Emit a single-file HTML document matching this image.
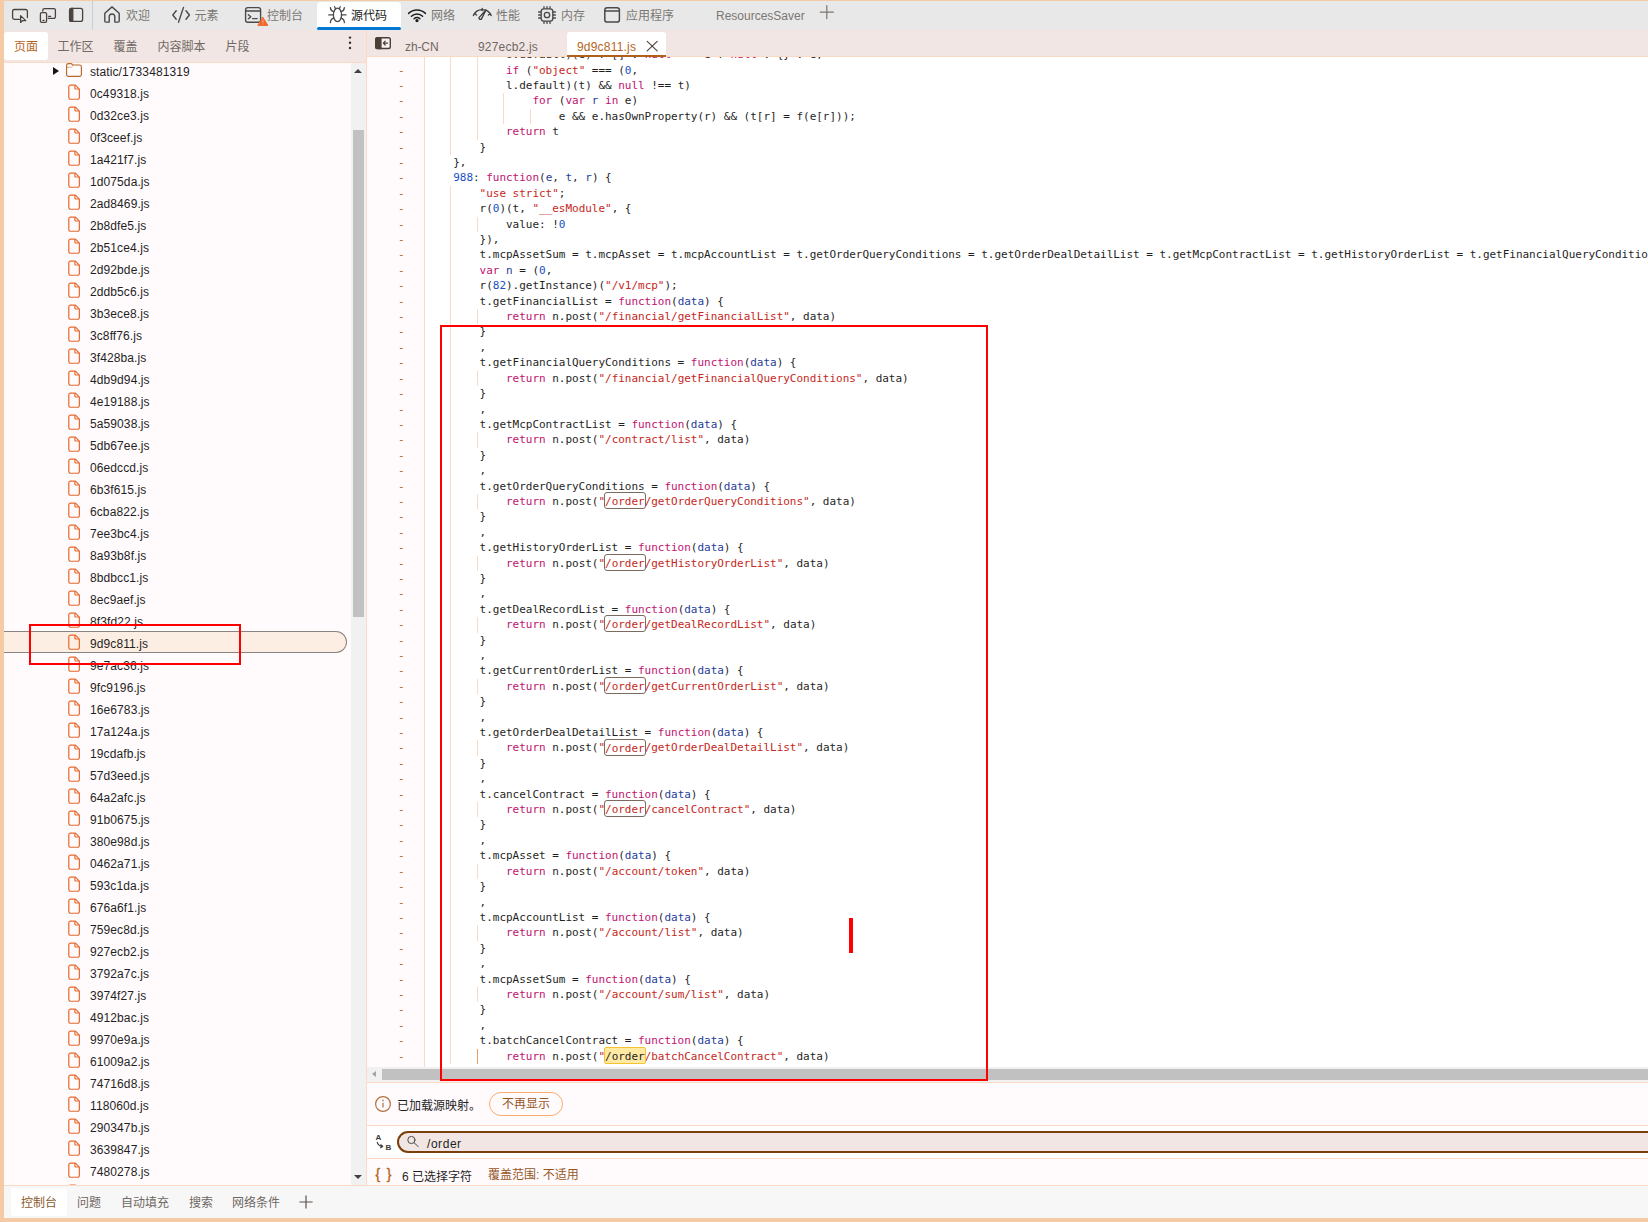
<!DOCTYPE html>
<html lang="zh-CN">
<head>
<meta charset="utf-8">
<title>DevTools</title>
<style>
*{box-sizing:border-box;margin:0;padding:0}
html,body{width:1648px;height:1222px;overflow:hidden}
body{position:relative;background:#f5cba5;font-family:"Liberation Sans","Noto Sans CJK SC",sans-serif;font-size:12px;color:#1f1f1f;-webkit-font-smoothing:antialiased}
.abs{position:absolute}
#toolbar{position:absolute;left:4px;top:1px;width:1644px;height:29px;background:#e8e8e8}
#toolbar .t{position:absolute;top:0;height:29px;line-height:31px;color:#7b7773;white-space:nowrap;font-size:12px}
#toolbar svg{position:absolute}
#acttab{position:absolute;left:313px;top:0.5px;width:84px;height:28.5px;background:#fff;border-radius:4px 4px 0 0}
#acttab:after{content:"";position:absolute;left:0;right:0;top:25.5px;height:3px;background:#0078d4;border-radius:1.5px}
#tsep{position:absolute;left:88px;top:0;width:1px;height:29px;background:#c9cdd6}
#left{position:absolute;left:4px;top:30px;width:362px;height:1155px;background:#fffbfd}
#ltabs{position:absolute;left:0;top:0;width:362px;height:32px;background:#f1e6e3}
#ltabs .t{position:absolute;top:0;height:32px;line-height:35px;color:#6f6864;white-space:nowrap}
#ltabs .act{left:0;top:2px;width:44px;height:28px;line-height:31px;background:#fff;border-radius:3px;color:#b5651d;text-align:center}
#lline{position:absolute;left:0;top:32px;width:362px;height:1px;background:#fcd9c2}
#tree{position:absolute;left:0;top:33px;width:362px;height:1122px;overflow:hidden}
.row{position:absolute;left:0;width:343px;height:22px;line-height:22px;white-space:nowrap;margin-top:-63px}
.row .nm{position:absolute;left:86px;top:1px;letter-spacing:0.1px;font-size:12px;color:#1f1f24}
.row .fi{position:absolute;left:63px;top:2px}
.row .fo{position:absolute;left:61px;top:2px}
.row .arrow{position:absolute;left:49px;top:7px;width:0;height:0;border-left:6px solid #1b1310;border-top:4px solid transparent;border-bottom:4px solid transparent}
.row.sel{margin-top:-64px;background:#fdeee3;border:1px solid #8a8480;border-left:none;border-radius:0 11px 11px 0}
.row.sel .nm{top:1px}
.row.sel .fi{top:2px}
#vsb{position:absolute;left:347px;top:33px;width:15px;height:1122px;background:#f1f1f1}
#vsb .th{position:absolute;left:2px;top:67px;width:11px;height:487px;background:#c1c1c1}
.aup{position:absolute;left:3.4px;top:5.6px;width:0;height:0;border-bottom:4.6px solid #404040;border-left:4.1px solid transparent;border-right:4.1px solid transparent}
.adn{position:absolute;left:3.4px;bottom:5.6px;width:0;height:0;border-top:4.6px solid #404040;border-left:4.1px solid transparent;border-right:4.1px solid transparent}
#split{position:absolute;left:366px;top:30px;width:1px;height:1155px;background:#fcd9c2}
#right{position:absolute;left:367px;top:30px;width:1281px;height:1155px;background:#fff}
#rtabs{position:absolute;left:0;top:0;width:1281px;height:26px;background:#f1e6e3;z-index:3}
#rtabs .t{position:absolute;z-index:2;letter-spacing:0.2px;top:2px;height:24px;line-height:30px;color:#6f6864;white-space:nowrap}
#rline{position:absolute;left:0;top:26px;width:1281px;height:1px;background:#fcd9c2}
#ract{position:absolute;left:200px;top:2px;width:99px;height:25px;background:#fff;border-radius:3px 3px 0 0;border-bottom:2.4px solid #b0601a;z-index:1}
#code{position:absolute;left:0;top:27px;width:1281px;height:1010px;overflow:hidden;background:#fff}
#gut{position:absolute;left:0;top:0;width:58px;height:1010px;background:#fffbfd;border-right:1px solid #fcd9c2}
#lines{position:absolute;left:0;top:-9.85px;width:3000px;font-family:"DejaVu Sans Mono","Liberation Mono",monospace;font-size:11px;line-height:15.41px;letter-spacing:-0.022px;color:#1f1f1f}
.ln{position:relative;height:15.41px;white-space:pre}
.ln .gm{position:absolute;left:31px;top:0;color:#b4611a}
.ln .tx{position:absolute;left:59.8px;top:0}
.ln .g.a{background:#e8a060}
.ln .g{position:absolute;top:0;width:1px;height:15.41px;background:#fcd9c2;margin-left:57px}
.k{color:#c0136f}.s{color:#c5281c}.n{color:#1750c4}.d{color:#1f3d99}
.m{color:#c5281c;outline:1px solid #7a6a60;outline-offset:0;border-radius:2px;padding:1.8px 0 0.3px}
.c{color:#1f1f1f;background:#ffe9a3;outline:1px solid #f5c331;border-radius:1px;padding:1.8px 0 0.3px}
#hsb{position:absolute;left:0;top:1037px;width:1281px;height:15px;background:#f1f1f1}
#hsb .th{position:absolute;left:15px;top:2px;width:1270px;height:11px;background:#c1c1c1}
#hsb .al{position:absolute;left:5px;top:3.9px;width:0;height:0;border-right:4px solid #a3a3a3;border-top:3.6px solid transparent;border-bottom:3.6px solid transparent}
.hl{position:absolute;left:0;width:1281px;height:1px;background:#fcd9c2}
#info{position:absolute;left:0;top:1053px;width:1281px;height:42px;background:#fffbfd}
#srch{position:absolute;left:0;top:1096px;width:1281px;height:32px;background:#fff}
#stat{position:absolute;left:0;top:1129px;width:1281px;height:26px;background:#fffbfd}
#bline{position:absolute;left:4px;top:1185px;width:1644px;height:1px;background:#fcd9c2}
#drawer{position:absolute;left:4px;top:1186px;width:1644px;height:32px;background:#f7f7f7}
#drawer .t{position:absolute;top:0;height:32px;line-height:35px;color:#6f6864;white-space:nowrap}
#drawer .act{left:7px;top:2px;width:56px;height:28px;line-height:31px;background:#fff;border-radius:3px;color:#8a5a2b;text-align:center}
.redbox{position:absolute;border:2px solid #ff0000}
</style>
</head>
<body>
<div id="toolbar">
  <div id="acttab"></div>
  <div id="tsep"></div>
  <svg style="left:-4px;top:-1px" width="860" height="30" viewBox="0 0 860 30" fill="none" stroke="#4b4340" stroke-width="1.3" stroke-linecap="round" stroke-linejoin="round">
<!-- inspect -->
<path d="M19.5 19.3H14.4a1.8 1.8 0 0 1-1.8-1.8V11.3a1.8 1.8 0 0 1 1.8-1.8H25.6a1.8 1.8 0 0 1 1.8 1.8V17.5"/>
<path d="M20.6 15.6V22.4L22.6 20.6H25.8Z"/>
<!-- device -->
<path d="M42.8 11V10.2a1.6 1.6 0 0 1 1.6-1.6H53.8a1.6 1.6 0 0 1 1.6 1.6V16.8a1.6 1.6 0 0 1-1.6 1.6H48.4"/>
<rect x="40.4" y="12.6" width="6.2" height="9.8" rx="1.3"/>
<path d="M48.6 16.3H50.6M43 20.4H44"/>
<!-- dock -->
<rect x="69.6" y="8.4" width="13" height="13" rx="2"/>
<path d="M69.6 10.4a2 2 0 0 1 2-2H72.8V21.4H71.6a2 2 0 0 1-2-2Z" fill="#4b4340"/>
<!-- home -->
<g stroke="#4a4a4a" stroke-width="1.4">
<path d="M104.8 13.2 112 6.9l7.2 6.3v7.9a1 1 0 0 1-1 1h-3.4v-5.300000000000001a2.800000000000001 2.8 0 0 0-5.6 0v5.3h-3.4a1 1 0 0 1-1-1Z"/>
<!-- elements -->
<path d="M176.2 10.8 172.8 15l3.4 4.2M186 10.8 189.4 15l-3.4 4.2M183.5 7.4 178.5 22.2"/>
<!-- console -->
<rect x="245.6" y="7.6" width="15" height="14.6" rx="2.2"/>
<path d="M245.8 11H260.4M248.4 14.8 250.8 16.8 248.4 18.8M252.6 18.6H257.2"/>
</g>
<path d="M263 17.4 267.8 25.4H258.2Z" fill="#f0692a" stroke="#f0692a" stroke-width="1"/>
<path d="M263 20v2.600000000000001M263 24v.2" stroke="#f7b08a" stroke-width="0.9"/>
<!-- bug -->
<g stroke="#4a4a4a" stroke-width="1.3">
<ellipse cx="337.5" cy="14.9" rx="4.1" ry="6.8"/>
<path d="M335.4 8.8 334.6 6.6M339.4 8.8 340.2 6.6M333.5 14.9H328.8M341.3 14.9H346M333.8 11.6C331.4 11.2 330.6 9.6 330.4 7.6M341 11.6C343.4 11.2 344.2 9.6 344.4 7.6M333.8 18.2C331.4 18.6 330.6 20.2 330.4 22.6M341 18.2C343.4 18.6 344.2 20.2 344.4 22.6"/>
</g>
<!-- wifi -->
<g stroke="#1e1e1e" stroke-width="1.5">
<path d="M408.6 13.4a12 12 0 0 1 16.8 0M411.4 16.2a8 8 0 0 1 11.2 0M414.1 18.7a4.100000000000001 4.1 0 0 1 5.8 0"/>
<circle cx="417" cy="20.6" r="0.9" fill="#1e1e1e"/>
</g>
<!-- performance -->
<g stroke="#3a3a3a" stroke-width="1.3">
<path d="M473.4 15.6a9.6 9.6 0 0 1 17.8 0M482.2 8.4V10.6M475 13.8 476.6 15M490 13.8 488.400000000000006 15"/>
<path d="M486 10 481.6 18.6a1.4 1.4 0 0 1-2.6-1Z"/>
</g>
<!-- memory -->
<g stroke="#4a4a4a" stroke-width="1.3">
<rect x="541.2" y="8.8" width="11.6" height="12.4" rx="2.6"/>
<circle cx="547" cy="15" r="2.7"/>
<path d="M544 8.6V6.6M547 8.6V6.6M550 8.6V6.6M544 21.4V23.4M547 21.4V23.4M550 21.4V23.4M541 12H538.6M541 15H538.6M541 18H538.6M553 12H555.4M553 15H555.4M553 18H555.4"/>
</g>
<!-- application -->
<g stroke="#4a4a4a" stroke-width="1.5">
<rect x="604.8" y="7.7" width="14.6" height="14.4" rx="2.4"/>
<path d="M605 11H619.2"/>
</g>
<!-- plus -->
<path d="M826.8 5.6V18.6M820.3 12.1H833.3" stroke="#7d746f" stroke-width="1.2"/>
</svg>

  <span class="t" style="left:122px">欢迎</span>
  <span class="t" style="left:190.5px">元素</span>
  <span class="t" style="left:263px">控制台</span>
  <span class="t" style="left:347px;color:#1b1b1b">源代码</span>
  <span class="t" style="left:427px">网络</span>
  <span class="t" style="left:492px">性能</span>
  <span class="t" style="left:557px">内存</span>
  <span class="t" style="left:622px">应用程序</span>
  <span class="t" style="left:712px">ResourcesSaver</span>
</div>
<div id="left">
  <div id="ltabs">
    <span class="t act">页面</span>
    <span class="t" style="left:53.5px">工作区</span>
    <span class="t" style="left:109.5px">覆盖</span>
    <span class="t" style="left:153.5px">内容脚本</span>
    <span class="t" style="left:221.5px">片段</span>
    <svg class="abs" style="left:342px;top:5.3px" width="8" height="16" viewBox="0 0 8 16"><circle cx="4" cy="2.6" r="1.2" fill="#3a302b"/><circle cx="4" cy="7.8" r="1.2" fill="#3a302b"/><circle cx="4" cy="13" r="1.2" fill="#3a302b"/></svg>
  </div>
  <div id="lline"></div>
  <div id="tree">
<div class="row" style="top:60px"><span class="arrow"></span><svg class="fo" width="18" height="16" viewBox="0 0 18 16" fill="none" stroke-linejoin="round"><path d="M1.6 5.3H5.6c.8 0 1.3-.3 1.7-.9l.7-1.1" stroke="#dbb08c" stroke-width="1"/><path d="M1.6 4.6V3.4a1.8 1.8 0 0 1 1.8-1.8H5.7c.7 0 1.2.3 1.6.8l.5.6H14.6a1.8 1.8 0 0 1 1.8 1.8V12.6a1.8 1.8 0 0 1-1.8 1.8H3.4a1.8 1.8 0 0 1-1.8-1.8Z" stroke="#b5692b" stroke-width="1.15"/></svg><span class="nm" >static/1733481319</span></div>
<div class="row" style="top:82px"><svg class="fi" width="14" height="17" viewBox="0 0 14 17" fill="none" stroke="#e8682a" stroke-width="1.2" stroke-linejoin="round"><path d="M3.45 1.15H8.4L12.35 5.1V13.6a1.65 1.65 0 0 1-1.65 1.65H3.45a1.65 1.65 0 0 1-1.65-1.65V2.8a1.65 1.65 0 0 1 1.65-1.65Z"/><path d="M7.9 1.3V4a1 1 0 0 0 1 1H12.2"/></svg><span class="nm">0c49318.js</span></div>
<div class="row" style="top:104px"><svg class="fi" width="14" height="17" viewBox="0 0 14 17" fill="none" stroke="#e8682a" stroke-width="1.2" stroke-linejoin="round"><path d="M3.45 1.15H8.4L12.35 5.1V13.6a1.65 1.65 0 0 1-1.65 1.65H3.45a1.65 1.65 0 0 1-1.65-1.65V2.8a1.65 1.65 0 0 1 1.65-1.65Z"/><path d="M7.9 1.3V4a1 1 0 0 0 1 1H12.2"/></svg><span class="nm">0d32ce3.js</span></div>
<div class="row" style="top:126px"><svg class="fi" width="14" height="17" viewBox="0 0 14 17" fill="none" stroke="#e8682a" stroke-width="1.2" stroke-linejoin="round"><path d="M3.45 1.15H8.4L12.35 5.1V13.6a1.65 1.65 0 0 1-1.65 1.65H3.45a1.65 1.65 0 0 1-1.65-1.65V2.8a1.65 1.65 0 0 1 1.65-1.65Z"/><path d="M7.9 1.3V4a1 1 0 0 0 1 1H12.2"/></svg><span class="nm">0f3ceef.js</span></div>
<div class="row" style="top:148px"><svg class="fi" width="14" height="17" viewBox="0 0 14 17" fill="none" stroke="#e8682a" stroke-width="1.2" stroke-linejoin="round"><path d="M3.45 1.15H8.4L12.35 5.1V13.6a1.65 1.65 0 0 1-1.65 1.65H3.45a1.65 1.65 0 0 1-1.65-1.65V2.8a1.65 1.65 0 0 1 1.65-1.65Z"/><path d="M7.9 1.3V4a1 1 0 0 0 1 1H12.2"/></svg><span class="nm">1a421f7.js</span></div>
<div class="row" style="top:170px"><svg class="fi" width="14" height="17" viewBox="0 0 14 17" fill="none" stroke="#e8682a" stroke-width="1.2" stroke-linejoin="round"><path d="M3.45 1.15H8.4L12.35 5.1V13.6a1.65 1.65 0 0 1-1.65 1.65H3.45a1.65 1.65 0 0 1-1.65-1.65V2.8a1.65 1.65 0 0 1 1.65-1.65Z"/><path d="M7.9 1.3V4a1 1 0 0 0 1 1H12.2"/></svg><span class="nm">1d075da.js</span></div>
<div class="row" style="top:192px"><svg class="fi" width="14" height="17" viewBox="0 0 14 17" fill="none" stroke="#e8682a" stroke-width="1.2" stroke-linejoin="round"><path d="M3.45 1.15H8.4L12.35 5.1V13.6a1.65 1.65 0 0 1-1.65 1.65H3.45a1.65 1.65 0 0 1-1.65-1.65V2.8a1.65 1.65 0 0 1 1.65-1.65Z"/><path d="M7.9 1.3V4a1 1 0 0 0 1 1H12.2"/></svg><span class="nm">2ad8469.js</span></div>
<div class="row" style="top:214px"><svg class="fi" width="14" height="17" viewBox="0 0 14 17" fill="none" stroke="#e8682a" stroke-width="1.2" stroke-linejoin="round"><path d="M3.45 1.15H8.4L12.35 5.1V13.6a1.65 1.65 0 0 1-1.65 1.65H3.45a1.65 1.65 0 0 1-1.65-1.65V2.8a1.65 1.65 0 0 1 1.65-1.65Z"/><path d="M7.9 1.3V4a1 1 0 0 0 1 1H12.2"/></svg><span class="nm">2b8dfe5.js</span></div>
<div class="row" style="top:236px"><svg class="fi" width="14" height="17" viewBox="0 0 14 17" fill="none" stroke="#e8682a" stroke-width="1.2" stroke-linejoin="round"><path d="M3.45 1.15H8.4L12.35 5.1V13.6a1.65 1.65 0 0 1-1.65 1.65H3.45a1.65 1.65 0 0 1-1.65-1.65V2.8a1.65 1.65 0 0 1 1.65-1.65Z"/><path d="M7.9 1.3V4a1 1 0 0 0 1 1H12.2"/></svg><span class="nm">2b51ce4.js</span></div>
<div class="row" style="top:258px"><svg class="fi" width="14" height="17" viewBox="0 0 14 17" fill="none" stroke="#e8682a" stroke-width="1.2" stroke-linejoin="round"><path d="M3.45 1.15H8.4L12.35 5.1V13.6a1.65 1.65 0 0 1-1.65 1.65H3.45a1.65 1.65 0 0 1-1.65-1.65V2.8a1.65 1.65 0 0 1 1.65-1.65Z"/><path d="M7.9 1.3V4a1 1 0 0 0 1 1H12.2"/></svg><span class="nm">2d92bde.js</span></div>
<div class="row" style="top:280px"><svg class="fi" width="14" height="17" viewBox="0 0 14 17" fill="none" stroke="#e8682a" stroke-width="1.2" stroke-linejoin="round"><path d="M3.45 1.15H8.4L12.35 5.1V13.6a1.65 1.65 0 0 1-1.65 1.65H3.45a1.65 1.65 0 0 1-1.65-1.65V2.8a1.65 1.65 0 0 1 1.65-1.65Z"/><path d="M7.9 1.3V4a1 1 0 0 0 1 1H12.2"/></svg><span class="nm">2ddb5c6.js</span></div>
<div class="row" style="top:302px"><svg class="fi" width="14" height="17" viewBox="0 0 14 17" fill="none" stroke="#e8682a" stroke-width="1.2" stroke-linejoin="round"><path d="M3.45 1.15H8.4L12.35 5.1V13.6a1.65 1.65 0 0 1-1.65 1.65H3.45a1.65 1.65 0 0 1-1.65-1.65V2.8a1.65 1.65 0 0 1 1.65-1.65Z"/><path d="M7.9 1.3V4a1 1 0 0 0 1 1H12.2"/></svg><span class="nm">3b3ece8.js</span></div>
<div class="row" style="top:324px"><svg class="fi" width="14" height="17" viewBox="0 0 14 17" fill="none" stroke="#e8682a" stroke-width="1.2" stroke-linejoin="round"><path d="M3.45 1.15H8.4L12.35 5.1V13.6a1.65 1.65 0 0 1-1.65 1.65H3.45a1.65 1.65 0 0 1-1.65-1.65V2.8a1.65 1.65 0 0 1 1.65-1.65Z"/><path d="M7.9 1.3V4a1 1 0 0 0 1 1H12.2"/></svg><span class="nm">3c8ff76.js</span></div>
<div class="row" style="top:346px"><svg class="fi" width="14" height="17" viewBox="0 0 14 17" fill="none" stroke="#e8682a" stroke-width="1.2" stroke-linejoin="round"><path d="M3.45 1.15H8.4L12.35 5.1V13.6a1.65 1.65 0 0 1-1.65 1.65H3.45a1.65 1.65 0 0 1-1.65-1.65V2.8a1.65 1.65 0 0 1 1.65-1.65Z"/><path d="M7.9 1.3V4a1 1 0 0 0 1 1H12.2"/></svg><span class="nm">3f428ba.js</span></div>
<div class="row" style="top:368px"><svg class="fi" width="14" height="17" viewBox="0 0 14 17" fill="none" stroke="#e8682a" stroke-width="1.2" stroke-linejoin="round"><path d="M3.45 1.15H8.4L12.35 5.1V13.6a1.65 1.65 0 0 1-1.65 1.65H3.45a1.65 1.65 0 0 1-1.65-1.65V2.8a1.65 1.65 0 0 1 1.65-1.65Z"/><path d="M7.9 1.3V4a1 1 0 0 0 1 1H12.2"/></svg><span class="nm">4db9d94.js</span></div>
<div class="row" style="top:390px"><svg class="fi" width="14" height="17" viewBox="0 0 14 17" fill="none" stroke="#e8682a" stroke-width="1.2" stroke-linejoin="round"><path d="M3.45 1.15H8.4L12.35 5.1V13.6a1.65 1.65 0 0 1-1.65 1.65H3.45a1.65 1.65 0 0 1-1.65-1.65V2.8a1.65 1.65 0 0 1 1.65-1.65Z"/><path d="M7.9 1.3V4a1 1 0 0 0 1 1H12.2"/></svg><span class="nm">4e19188.js</span></div>
<div class="row" style="top:412px"><svg class="fi" width="14" height="17" viewBox="0 0 14 17" fill="none" stroke="#e8682a" stroke-width="1.2" stroke-linejoin="round"><path d="M3.45 1.15H8.4L12.35 5.1V13.6a1.65 1.65 0 0 1-1.65 1.65H3.45a1.65 1.65 0 0 1-1.65-1.65V2.8a1.65 1.65 0 0 1 1.65-1.65Z"/><path d="M7.9 1.3V4a1 1 0 0 0 1 1H12.2"/></svg><span class="nm">5a59038.js</span></div>
<div class="row" style="top:434px"><svg class="fi" width="14" height="17" viewBox="0 0 14 17" fill="none" stroke="#e8682a" stroke-width="1.2" stroke-linejoin="round"><path d="M3.45 1.15H8.4L12.35 5.1V13.6a1.65 1.65 0 0 1-1.65 1.65H3.45a1.65 1.65 0 0 1-1.65-1.65V2.8a1.65 1.65 0 0 1 1.65-1.65Z"/><path d="M7.9 1.3V4a1 1 0 0 0 1 1H12.2"/></svg><span class="nm">5db67ee.js</span></div>
<div class="row" style="top:456px"><svg class="fi" width="14" height="17" viewBox="0 0 14 17" fill="none" stroke="#e8682a" stroke-width="1.2" stroke-linejoin="round"><path d="M3.45 1.15H8.4L12.35 5.1V13.6a1.65 1.65 0 0 1-1.65 1.65H3.45a1.65 1.65 0 0 1-1.65-1.65V2.8a1.65 1.65 0 0 1 1.65-1.65Z"/><path d="M7.9 1.3V4a1 1 0 0 0 1 1H12.2"/></svg><span class="nm">06edccd.js</span></div>
<div class="row" style="top:478px"><svg class="fi" width="14" height="17" viewBox="0 0 14 17" fill="none" stroke="#e8682a" stroke-width="1.2" stroke-linejoin="round"><path d="M3.45 1.15H8.4L12.35 5.1V13.6a1.65 1.65 0 0 1-1.65 1.65H3.45a1.65 1.65 0 0 1-1.65-1.65V2.8a1.65 1.65 0 0 1 1.65-1.65Z"/><path d="M7.9 1.3V4a1 1 0 0 0 1 1H12.2"/></svg><span class="nm">6b3f615.js</span></div>
<div class="row" style="top:500px"><svg class="fi" width="14" height="17" viewBox="0 0 14 17" fill="none" stroke="#e8682a" stroke-width="1.2" stroke-linejoin="round"><path d="M3.45 1.15H8.4L12.35 5.1V13.6a1.65 1.65 0 0 1-1.65 1.65H3.45a1.65 1.65 0 0 1-1.65-1.65V2.8a1.65 1.65 0 0 1 1.65-1.65Z"/><path d="M7.9 1.3V4a1 1 0 0 0 1 1H12.2"/></svg><span class="nm">6cba822.js</span></div>
<div class="row" style="top:522px"><svg class="fi" width="14" height="17" viewBox="0 0 14 17" fill="none" stroke="#e8682a" stroke-width="1.2" stroke-linejoin="round"><path d="M3.45 1.15H8.4L12.35 5.1V13.6a1.65 1.65 0 0 1-1.65 1.65H3.45a1.65 1.65 0 0 1-1.65-1.65V2.8a1.65 1.65 0 0 1 1.65-1.65Z"/><path d="M7.9 1.3V4a1 1 0 0 0 1 1H12.2"/></svg><span class="nm">7ee3bc4.js</span></div>
<div class="row" style="top:544px"><svg class="fi" width="14" height="17" viewBox="0 0 14 17" fill="none" stroke="#e8682a" stroke-width="1.2" stroke-linejoin="round"><path d="M3.45 1.15H8.4L12.35 5.1V13.6a1.65 1.65 0 0 1-1.65 1.65H3.45a1.65 1.65 0 0 1-1.65-1.65V2.8a1.65 1.65 0 0 1 1.65-1.65Z"/><path d="M7.9 1.3V4a1 1 0 0 0 1 1H12.2"/></svg><span class="nm">8a93b8f.js</span></div>
<div class="row" style="top:566px"><svg class="fi" width="14" height="17" viewBox="0 0 14 17" fill="none" stroke="#e8682a" stroke-width="1.2" stroke-linejoin="round"><path d="M3.45 1.15H8.4L12.35 5.1V13.6a1.65 1.65 0 0 1-1.65 1.65H3.45a1.65 1.65 0 0 1-1.65-1.65V2.8a1.65 1.65 0 0 1 1.65-1.65Z"/><path d="M7.9 1.3V4a1 1 0 0 0 1 1H12.2"/></svg><span class="nm">8bdbcc1.js</span></div>
<div class="row" style="top:588px"><svg class="fi" width="14" height="17" viewBox="0 0 14 17" fill="none" stroke="#e8682a" stroke-width="1.2" stroke-linejoin="round"><path d="M3.45 1.15H8.4L12.35 5.1V13.6a1.65 1.65 0 0 1-1.65 1.65H3.45a1.65 1.65 0 0 1-1.65-1.65V2.8a1.65 1.65 0 0 1 1.65-1.65Z"/><path d="M7.9 1.3V4a1 1 0 0 0 1 1H12.2"/></svg><span class="nm">8ec9aef.js</span></div>
<div class="row" style="top:610px"><svg class="fi" width="14" height="17" viewBox="0 0 14 17" fill="none" stroke="#e8682a" stroke-width="1.2" stroke-linejoin="round"><path d="M3.45 1.15H8.4L12.35 5.1V13.6a1.65 1.65 0 0 1-1.65 1.65H3.45a1.65 1.65 0 0 1-1.65-1.65V2.8a1.65 1.65 0 0 1 1.65-1.65Z"/><path d="M7.9 1.3V4a1 1 0 0 0 1 1H12.2"/></svg><span class="nm">8f3fd22.js</span></div>
<div class="row sel" style="top:632px"><svg class="fi" width="14" height="17" viewBox="0 0 14 17" fill="none" stroke="#e8682a" stroke-width="1.2" stroke-linejoin="round"><path d="M3.45 1.15H8.4L12.35 5.1V13.6a1.65 1.65 0 0 1-1.65 1.65H3.45a1.65 1.65 0 0 1-1.65-1.65V2.8a1.65 1.65 0 0 1 1.65-1.65Z"/><path d="M7.9 1.3V4a1 1 0 0 0 1 1H12.2"/></svg><span class="nm">9d9c811.js</span></div>
<div class="row" style="top:654px"><svg class="fi" width="14" height="17" viewBox="0 0 14 17" fill="none" stroke="#e8682a" stroke-width="1.2" stroke-linejoin="round"><path d="M3.45 1.15H8.4L12.35 5.1V13.6a1.65 1.65 0 0 1-1.65 1.65H3.45a1.65 1.65 0 0 1-1.65-1.65V2.8a1.65 1.65 0 0 1 1.65-1.65Z"/><path d="M7.9 1.3V4a1 1 0 0 0 1 1H12.2"/></svg><span class="nm">9e7ac36.js</span></div>
<div class="row" style="top:676px"><svg class="fi" width="14" height="17" viewBox="0 0 14 17" fill="none" stroke="#e8682a" stroke-width="1.2" stroke-linejoin="round"><path d="M3.45 1.15H8.4L12.35 5.1V13.6a1.65 1.65 0 0 1-1.65 1.65H3.45a1.65 1.65 0 0 1-1.65-1.65V2.8a1.65 1.65 0 0 1 1.65-1.65Z"/><path d="M7.9 1.3V4a1 1 0 0 0 1 1H12.2"/></svg><span class="nm">9fc9196.js</span></div>
<div class="row" style="top:698px"><svg class="fi" width="14" height="17" viewBox="0 0 14 17" fill="none" stroke="#e8682a" stroke-width="1.2" stroke-linejoin="round"><path d="M3.45 1.15H8.4L12.35 5.1V13.6a1.65 1.65 0 0 1-1.65 1.65H3.45a1.65 1.65 0 0 1-1.65-1.65V2.8a1.65 1.65 0 0 1 1.65-1.65Z"/><path d="M7.9 1.3V4a1 1 0 0 0 1 1H12.2"/></svg><span class="nm">16e6783.js</span></div>
<div class="row" style="top:720px"><svg class="fi" width="14" height="17" viewBox="0 0 14 17" fill="none" stroke="#e8682a" stroke-width="1.2" stroke-linejoin="round"><path d="M3.45 1.15H8.4L12.35 5.1V13.6a1.65 1.65 0 0 1-1.65 1.65H3.45a1.65 1.65 0 0 1-1.65-1.65V2.8a1.65 1.65 0 0 1 1.65-1.65Z"/><path d="M7.9 1.3V4a1 1 0 0 0 1 1H12.2"/></svg><span class="nm">17a124a.js</span></div>
<div class="row" style="top:742px"><svg class="fi" width="14" height="17" viewBox="0 0 14 17" fill="none" stroke="#e8682a" stroke-width="1.2" stroke-linejoin="round"><path d="M3.45 1.15H8.4L12.35 5.1V13.6a1.65 1.65 0 0 1-1.65 1.65H3.45a1.65 1.65 0 0 1-1.65-1.65V2.8a1.65 1.65 0 0 1 1.65-1.65Z"/><path d="M7.9 1.3V4a1 1 0 0 0 1 1H12.2"/></svg><span class="nm">19cdafb.js</span></div>
<div class="row" style="top:764px"><svg class="fi" width="14" height="17" viewBox="0 0 14 17" fill="none" stroke="#e8682a" stroke-width="1.2" stroke-linejoin="round"><path d="M3.45 1.15H8.4L12.35 5.1V13.6a1.65 1.65 0 0 1-1.65 1.65H3.45a1.65 1.65 0 0 1-1.65-1.65V2.8a1.65 1.65 0 0 1 1.65-1.65Z"/><path d="M7.9 1.3V4a1 1 0 0 0 1 1H12.2"/></svg><span class="nm">57d3eed.js</span></div>
<div class="row" style="top:786px"><svg class="fi" width="14" height="17" viewBox="0 0 14 17" fill="none" stroke="#e8682a" stroke-width="1.2" stroke-linejoin="round"><path d="M3.45 1.15H8.4L12.35 5.1V13.6a1.65 1.65 0 0 1-1.65 1.65H3.45a1.65 1.65 0 0 1-1.65-1.65V2.8a1.65 1.65 0 0 1 1.65-1.65Z"/><path d="M7.9 1.3V4a1 1 0 0 0 1 1H12.2"/></svg><span class="nm">64a2afc.js</span></div>
<div class="row" style="top:808px"><svg class="fi" width="14" height="17" viewBox="0 0 14 17" fill="none" stroke="#e8682a" stroke-width="1.2" stroke-linejoin="round"><path d="M3.45 1.15H8.4L12.35 5.1V13.6a1.65 1.65 0 0 1-1.65 1.65H3.45a1.65 1.65 0 0 1-1.65-1.65V2.8a1.65 1.65 0 0 1 1.65-1.65Z"/><path d="M7.9 1.3V4a1 1 0 0 0 1 1H12.2"/></svg><span class="nm">91b0675.js</span></div>
<div class="row" style="top:830px"><svg class="fi" width="14" height="17" viewBox="0 0 14 17" fill="none" stroke="#e8682a" stroke-width="1.2" stroke-linejoin="round"><path d="M3.45 1.15H8.4L12.35 5.1V13.6a1.65 1.65 0 0 1-1.65 1.65H3.45a1.65 1.65 0 0 1-1.65-1.65V2.8a1.65 1.65 0 0 1 1.65-1.65Z"/><path d="M7.9 1.3V4a1 1 0 0 0 1 1H12.2"/></svg><span class="nm">380e98d.js</span></div>
<div class="row" style="top:852px"><svg class="fi" width="14" height="17" viewBox="0 0 14 17" fill="none" stroke="#e8682a" stroke-width="1.2" stroke-linejoin="round"><path d="M3.45 1.15H8.4L12.35 5.1V13.6a1.65 1.65 0 0 1-1.65 1.65H3.45a1.65 1.65 0 0 1-1.65-1.65V2.8a1.65 1.65 0 0 1 1.65-1.65Z"/><path d="M7.9 1.3V4a1 1 0 0 0 1 1H12.2"/></svg><span class="nm">0462a71.js</span></div>
<div class="row" style="top:874px"><svg class="fi" width="14" height="17" viewBox="0 0 14 17" fill="none" stroke="#e8682a" stroke-width="1.2" stroke-linejoin="round"><path d="M3.45 1.15H8.4L12.35 5.1V13.6a1.65 1.65 0 0 1-1.65 1.65H3.45a1.65 1.65 0 0 1-1.65-1.65V2.8a1.65 1.65 0 0 1 1.65-1.65Z"/><path d="M7.9 1.3V4a1 1 0 0 0 1 1H12.2"/></svg><span class="nm">593c1da.js</span></div>
<div class="row" style="top:896px"><svg class="fi" width="14" height="17" viewBox="0 0 14 17" fill="none" stroke="#e8682a" stroke-width="1.2" stroke-linejoin="round"><path d="M3.45 1.15H8.4L12.35 5.1V13.6a1.65 1.65 0 0 1-1.65 1.65H3.45a1.65 1.65 0 0 1-1.65-1.65V2.8a1.65 1.65 0 0 1 1.65-1.65Z"/><path d="M7.9 1.3V4a1 1 0 0 0 1 1H12.2"/></svg><span class="nm">676a6f1.js</span></div>
<div class="row" style="top:918px"><svg class="fi" width="14" height="17" viewBox="0 0 14 17" fill="none" stroke="#e8682a" stroke-width="1.2" stroke-linejoin="round"><path d="M3.45 1.15H8.4L12.35 5.1V13.6a1.65 1.65 0 0 1-1.65 1.65H3.45a1.65 1.65 0 0 1-1.65-1.65V2.8a1.65 1.65 0 0 1 1.65-1.65Z"/><path d="M7.9 1.3V4a1 1 0 0 0 1 1H12.2"/></svg><span class="nm">759ec8d.js</span></div>
<div class="row" style="top:940px"><svg class="fi" width="14" height="17" viewBox="0 0 14 17" fill="none" stroke="#e8682a" stroke-width="1.2" stroke-linejoin="round"><path d="M3.45 1.15H8.4L12.35 5.1V13.6a1.65 1.65 0 0 1-1.65 1.65H3.45a1.65 1.65 0 0 1-1.65-1.65V2.8a1.65 1.65 0 0 1 1.65-1.65Z"/><path d="M7.9 1.3V4a1 1 0 0 0 1 1H12.2"/></svg><span class="nm">927ecb2.js</span></div>
<div class="row" style="top:962px"><svg class="fi" width="14" height="17" viewBox="0 0 14 17" fill="none" stroke="#e8682a" stroke-width="1.2" stroke-linejoin="round"><path d="M3.45 1.15H8.4L12.35 5.1V13.6a1.65 1.65 0 0 1-1.65 1.65H3.45a1.65 1.65 0 0 1-1.65-1.65V2.8a1.65 1.65 0 0 1 1.65-1.65Z"/><path d="M7.9 1.3V4a1 1 0 0 0 1 1H12.2"/></svg><span class="nm">3792a7c.js</span></div>
<div class="row" style="top:984px"><svg class="fi" width="14" height="17" viewBox="0 0 14 17" fill="none" stroke="#e8682a" stroke-width="1.2" stroke-linejoin="round"><path d="M3.45 1.15H8.4L12.35 5.1V13.6a1.65 1.65 0 0 1-1.65 1.65H3.45a1.65 1.65 0 0 1-1.65-1.65V2.8a1.65 1.65 0 0 1 1.65-1.65Z"/><path d="M7.9 1.3V4a1 1 0 0 0 1 1H12.2"/></svg><span class="nm">3974f27.js</span></div>
<div class="row" style="top:1006px"><svg class="fi" width="14" height="17" viewBox="0 0 14 17" fill="none" stroke="#e8682a" stroke-width="1.2" stroke-linejoin="round"><path d="M3.45 1.15H8.4L12.35 5.1V13.6a1.65 1.65 0 0 1-1.65 1.65H3.45a1.65 1.65 0 0 1-1.65-1.65V2.8a1.65 1.65 0 0 1 1.65-1.65Z"/><path d="M7.9 1.3V4a1 1 0 0 0 1 1H12.2"/></svg><span class="nm">4912bac.js</span></div>
<div class="row" style="top:1028px"><svg class="fi" width="14" height="17" viewBox="0 0 14 17" fill="none" stroke="#e8682a" stroke-width="1.2" stroke-linejoin="round"><path d="M3.45 1.15H8.4L12.35 5.1V13.6a1.65 1.65 0 0 1-1.65 1.65H3.45a1.65 1.65 0 0 1-1.65-1.65V2.8a1.65 1.65 0 0 1 1.65-1.65Z"/><path d="M7.9 1.3V4a1 1 0 0 0 1 1H12.2"/></svg><span class="nm">9970e9a.js</span></div>
<div class="row" style="top:1050px"><svg class="fi" width="14" height="17" viewBox="0 0 14 17" fill="none" stroke="#e8682a" stroke-width="1.2" stroke-linejoin="round"><path d="M3.45 1.15H8.4L12.35 5.1V13.6a1.65 1.65 0 0 1-1.65 1.65H3.45a1.65 1.65 0 0 1-1.65-1.65V2.8a1.65 1.65 0 0 1 1.65-1.65Z"/><path d="M7.9 1.3V4a1 1 0 0 0 1 1H12.2"/></svg><span class="nm">61009a2.js</span></div>
<div class="row" style="top:1072px"><svg class="fi" width="14" height="17" viewBox="0 0 14 17" fill="none" stroke="#e8682a" stroke-width="1.2" stroke-linejoin="round"><path d="M3.45 1.15H8.4L12.35 5.1V13.6a1.65 1.65 0 0 1-1.65 1.65H3.45a1.65 1.65 0 0 1-1.65-1.65V2.8a1.65 1.65 0 0 1 1.65-1.65Z"/><path d="M7.9 1.3V4a1 1 0 0 0 1 1H12.2"/></svg><span class="nm">74716d8.js</span></div>
<div class="row" style="top:1094px"><svg class="fi" width="14" height="17" viewBox="0 0 14 17" fill="none" stroke="#e8682a" stroke-width="1.2" stroke-linejoin="round"><path d="M3.45 1.15H8.4L12.35 5.1V13.6a1.65 1.65 0 0 1-1.65 1.65H3.45a1.65 1.65 0 0 1-1.65-1.65V2.8a1.65 1.65 0 0 1 1.65-1.65Z"/><path d="M7.9 1.3V4a1 1 0 0 0 1 1H12.2"/></svg><span class="nm">118060d.js</span></div>
<div class="row" style="top:1116px"><svg class="fi" width="14" height="17" viewBox="0 0 14 17" fill="none" stroke="#e8682a" stroke-width="1.2" stroke-linejoin="round"><path d="M3.45 1.15H8.4L12.35 5.1V13.6a1.65 1.65 0 0 1-1.65 1.65H3.45a1.65 1.65 0 0 1-1.65-1.65V2.8a1.65 1.65 0 0 1 1.65-1.65Z"/><path d="M7.9 1.3V4a1 1 0 0 0 1 1H12.2"/></svg><span class="nm">290347b.js</span></div>
<div class="row" style="top:1138px"><svg class="fi" width="14" height="17" viewBox="0 0 14 17" fill="none" stroke="#e8682a" stroke-width="1.2" stroke-linejoin="round"><path d="M3.45 1.15H8.4L12.35 5.1V13.6a1.65 1.65 0 0 1-1.65 1.65H3.45a1.65 1.65 0 0 1-1.65-1.65V2.8a1.65 1.65 0 0 1 1.65-1.65Z"/><path d="M7.9 1.3V4a1 1 0 0 0 1 1H12.2"/></svg><span class="nm">3639847.js</span></div>
<div class="row" style="top:1160px"><svg class="fi" width="14" height="17" viewBox="0 0 14 17" fill="none" stroke="#e8682a" stroke-width="1.2" stroke-linejoin="round"><path d="M3.45 1.15H8.4L12.35 5.1V13.6a1.65 1.65 0 0 1-1.65 1.65H3.45a1.65 1.65 0 0 1-1.65-1.65V2.8a1.65 1.65 0 0 1 1.65-1.65Z"/><path d="M7.9 1.3V4a1 1 0 0 0 1 1H12.2"/></svg><span class="nm">7480278.js</span></div>
<div class="row" style="top:1182px"><svg class="fi" width="14" height="17" viewBox="0 0 14 17" fill="none" stroke="#e8682a" stroke-width="1.2" stroke-linejoin="round"><path d="M3.45 1.15H8.4L12.35 5.1V13.6a1.65 1.65 0 0 1-1.65 1.65H3.45a1.65 1.65 0 0 1-1.65-1.65V2.8a1.65 1.65 0 0 1 1.65-1.65Z"/><path d="M7.9 1.3V4a1 1 0 0 0 1 1H12.2"/></svg><span class="nm">8421a3c.js</span></div>
  </div>
  <div id="vsb"><div class="aup"></div><div class="th"></div><div class="adn"></div></div>
</div>
<div id="split"></div>
<div id="right">
  <div id="rtabs">
    <div id="ract"></div>
    <svg class="abs" style="left:-367px;top:-30px;z-index:2" width="1648" height="60" viewBox="0 0 1648 60" fill="none" stroke-linecap="round" stroke-linejoin="round">
      <rect x="375.7" y="37.7" width="14.6" height="10.8" rx="1.8" fill="#f8f1ef" stroke="#4b4038" stroke-width="1.4"/>
      <path d="M375.7 39.5a1.8 1.8 0 0 1 1.8-1.8H380.9V48.5H377.5a1.8 1.8 0 0 1-1.8-1.8Z" fill="#4b4038" stroke="#4b4038" stroke-width="1.4"/>
      <path d="M387.6 43.1H383.4M385.2 41.2 383.3 43.1 385.2 45" stroke="#4b4038" stroke-width="1.2"/>
      <path d="M647.2 41.4 657.2 50.8M657.2 41.4 647.2 50.8" stroke="#4a3f38" stroke-width="1.1"/>
    </svg>
    <span class="t" style="left:38px;letter-spacing:-0.1px">zh-CN</span>
    <span class="t" style="left:111px">927ecb2.js</span>
    <span class="t" style="left:210px;color:#b5651d">9d9c811.js</span>
  </div>
  <div id="rline"></div>
  <div id="code">
    <div id="gut"></div>
    <div id="lines">
<div class="ln"><i class="g" style="left:26.4px"></i><i class="g" style="left:52.8px"></i><span class="gm">-</span><span class="tx">            o.default)(e) ? [] : <span class="k">null</span> === e ? <span class="k">null</span> : {} : e,</span></div>
<div class="ln"><i class="g" style="left:26.4px"></i><i class="g" style="left:52.8px"></i><span class="gm">-</span><span class="tx">            <span class="k">if</span> (<span class="s">"object"</span> === (<span class="n">0</span>,</span></div>
<div class="ln"><i class="g" style="left:26.4px"></i><i class="g" style="left:52.8px"></i><span class="gm">-</span><span class="tx">            l.default)(t) &amp;&amp; <span class="k">null</span> !== t)</span></div>
<div class="ln"><i class="g" style="left:26.4px"></i><i class="g" style="left:52.8px"></i><i class="g" style="left:79.2px"></i><span class="gm">-</span><span class="tx">                <span class="k">for</span> (<span class="k">var</span> <span class="d">r</span> <span class="k">in</span> e)</span></div>
<div class="ln"><i class="g" style="left:26.4px"></i><i class="g" style="left:52.8px"></i><i class="g" style="left:79.2px"></i><i class="g" style="left:105.6px"></i><span class="gm">-</span><span class="tx">                    e &amp;&amp; e.hasOwnProperty(r) &amp;&amp; (t[r] = f(e[r]));</span></div>
<div class="ln"><i class="g" style="left:26.4px"></i><i class="g" style="left:52.8px"></i><span class="gm">-</span><span class="tx">            <span class="k">return</span> t</span></div>
<div class="ln"><i class="g" style="left:26.4px"></i><span class="gm">-</span><span class="tx">        }</span></div>
<div class="ln"><span class="gm">-</span><span class="tx">    },</span></div>
<div class="ln"><span class="gm">-</span><span class="tx">    <span class="n">988</span>: <span class="k">function</span>(<span class="d">e</span>, <span class="d">t</span>, <span class="d">r</span>) {</span></div>
<div class="ln"><i class="g" style="left:26.4px"></i><span class="gm">-</span><span class="tx">        <span class="s">"use strict"</span>;</span></div>
<div class="ln"><i class="g" style="left:26.4px"></i><span class="gm">-</span><span class="tx">        r(<span class="n">0</span>)(t, <span class="s">"__esModule"</span>, {</span></div>
<div class="ln"><i class="g" style="left:26.4px"></i><i class="g" style="left:52.8px"></i><span class="gm">-</span><span class="tx">            value: !<span class="n">0</span></span></div>
<div class="ln"><i class="g" style="left:26.4px"></i><span class="gm">-</span><span class="tx">        }),</span></div>
<div class="ln"><i class="g" style="left:26.4px"></i><span class="gm">-</span><span class="tx">        t.mcpAssetSum = t.mcpAsset = t.mcpAccountList = t.getOrderQueryConditions = t.getOrderDealDetailList = t.getMcpContractList = t.getHistoryOrderList = t.getFinancialQueryConditions = t.getFinancialList = void 0;</span></div>
<div class="ln"><i class="g" style="left:26.4px"></i><span class="gm">-</span><span class="tx">        <span class="k">var</span> <span class="d">n</span> = (<span class="n">0</span>,</span></div>
<div class="ln"><i class="g" style="left:26.4px"></i><span class="gm">-</span><span class="tx">        r(<span class="n">82</span>).getInstance)(<span class="s">"/v1/mcp"</span>);</span></div>
<div class="ln"><i class="g" style="left:26.4px"></i><span class="gm">-</span><span class="tx">        t.getFinancialList = <span class="k">function</span>(<span class="d">data</span>) {</span></div>
<div class="ln"><i class="g" style="left:26.4px"></i><i class="g" style="left:52.8px"></i><span class="gm">-</span><span class="tx">            <span class="k">return</span> n.post(<span class="s">"/financial/getFinancialList"</span>, data)</span></div>
<div class="ln"><i class="g" style="left:26.4px"></i><span class="gm">-</span><span class="tx">        }</span></div>
<div class="ln"><i class="g" style="left:26.4px"></i><span class="gm">-</span><span class="tx">        ,</span></div>
<div class="ln"><i class="g" style="left:26.4px"></i><span class="gm">-</span><span class="tx">        t.getFinancialQueryConditions = <span class="k">function</span>(<span class="d">data</span>) {</span></div>
<div class="ln"><i class="g" style="left:26.4px"></i><i class="g" style="left:52.8px"></i><span class="gm">-</span><span class="tx">            <span class="k">return</span> n.post(<span class="s">"/financial/getFinancialQueryConditions"</span>, data)</span></div>
<div class="ln"><i class="g" style="left:26.4px"></i><span class="gm">-</span><span class="tx">        }</span></div>
<div class="ln"><i class="g" style="left:26.4px"></i><span class="gm">-</span><span class="tx">        ,</span></div>
<div class="ln"><i class="g" style="left:26.4px"></i><span class="gm">-</span><span class="tx">        t.getMcpContractList = <span class="k">function</span>(<span class="d">data</span>) {</span></div>
<div class="ln"><i class="g" style="left:26.4px"></i><i class="g" style="left:52.8px"></i><span class="gm">-</span><span class="tx">            <span class="k">return</span> n.post(<span class="s">"/contract/list"</span>, data)</span></div>
<div class="ln"><i class="g" style="left:26.4px"></i><span class="gm">-</span><span class="tx">        }</span></div>
<div class="ln"><i class="g" style="left:26.4px"></i><span class="gm">-</span><span class="tx">        ,</span></div>
<div class="ln"><i class="g" style="left:26.4px"></i><span class="gm">-</span><span class="tx">        t.getOrderQueryConditions = <span class="k">function</span>(<span class="d">data</span>) {</span></div>
<div class="ln"><i class="g" style="left:26.4px"></i><i class="g" style="left:52.8px"></i><span class="gm">-</span><span class="tx">            <span class="k">return</span> n.post(<span class="s">"</span><span class="m">/order</span><span class="s">/getOrderQueryConditions"</span>, data)</span></div>
<div class="ln"><i class="g" style="left:26.4px"></i><span class="gm">-</span><span class="tx">        }</span></div>
<div class="ln"><i class="g" style="left:26.4px"></i><span class="gm">-</span><span class="tx">        ,</span></div>
<div class="ln"><i class="g" style="left:26.4px"></i><span class="gm">-</span><span class="tx">        t.getHistoryOrderList = <span class="k">function</span>(<span class="d">data</span>) {</span></div>
<div class="ln"><i class="g" style="left:26.4px"></i><i class="g" style="left:52.8px"></i><span class="gm">-</span><span class="tx">            <span class="k">return</span> n.post(<span class="s">"</span><span class="m">/order</span><span class="s">/getHistoryOrderList"</span>, data)</span></div>
<div class="ln"><i class="g" style="left:26.4px"></i><span class="gm">-</span><span class="tx">        }</span></div>
<div class="ln"><i class="g" style="left:26.4px"></i><span class="gm">-</span><span class="tx">        ,</span></div>
<div class="ln"><i class="g" style="left:26.4px"></i><span class="gm">-</span><span class="tx">        t.getDealRecordList = <span class="k">function</span>(<span class="d">data</span>) {</span></div>
<div class="ln"><i class="g" style="left:26.4px"></i><i class="g" style="left:52.8px"></i><span class="gm">-</span><span class="tx">            <span class="k">return</span> n.post(<span class="s">"</span><span class="m">/order</span><span class="s">/getDealRecordList"</span>, data)</span></div>
<div class="ln"><i class="g" style="left:26.4px"></i><span class="gm">-</span><span class="tx">        }</span></div>
<div class="ln"><i class="g" style="left:26.4px"></i><span class="gm">-</span><span class="tx">        ,</span></div>
<div class="ln"><i class="g" style="left:26.4px"></i><span class="gm">-</span><span class="tx">        t.getCurrentOrderList = <span class="k">function</span>(<span class="d">data</span>) {</span></div>
<div class="ln"><i class="g" style="left:26.4px"></i><i class="g" style="left:52.8px"></i><span class="gm">-</span><span class="tx">            <span class="k">return</span> n.post(<span class="s">"</span><span class="m">/order</span><span class="s">/getCurrentOrderList"</span>, data)</span></div>
<div class="ln"><i class="g" style="left:26.4px"></i><span class="gm">-</span><span class="tx">        }</span></div>
<div class="ln"><i class="g" style="left:26.4px"></i><span class="gm">-</span><span class="tx">        ,</span></div>
<div class="ln"><i class="g" style="left:26.4px"></i><span class="gm">-</span><span class="tx">        t.getOrderDealDetailList = <span class="k">function</span>(<span class="d">data</span>) {</span></div>
<div class="ln"><i class="g" style="left:26.4px"></i><i class="g" style="left:52.8px"></i><span class="gm">-</span><span class="tx">            <span class="k">return</span> n.post(<span class="s">"</span><span class="m">/order</span><span class="s">/getOrderDealDetailList"</span>, data)</span></div>
<div class="ln"><i class="g" style="left:26.4px"></i><span class="gm">-</span><span class="tx">        }</span></div>
<div class="ln"><i class="g" style="left:26.4px"></i><span class="gm">-</span><span class="tx">        ,</span></div>
<div class="ln"><i class="g" style="left:26.4px"></i><span class="gm">-</span><span class="tx">        t.cancelContract = <span class="k">function</span>(<span class="d">data</span>) {</span></div>
<div class="ln"><i class="g" style="left:26.4px"></i><i class="g" style="left:52.8px"></i><span class="gm">-</span><span class="tx">            <span class="k">return</span> n.post(<span class="s">"</span><span class="m">/order</span><span class="s">/cancelContract"</span>, data)</span></div>
<div class="ln"><i class="g" style="left:26.4px"></i><span class="gm">-</span><span class="tx">        }</span></div>
<div class="ln"><i class="g" style="left:26.4px"></i><span class="gm">-</span><span class="tx">        ,</span></div>
<div class="ln"><i class="g" style="left:26.4px"></i><span class="gm">-</span><span class="tx">        t.mcpAsset = <span class="k">function</span>(<span class="d">data</span>) {</span></div>
<div class="ln"><i class="g" style="left:26.4px"></i><i class="g" style="left:52.8px"></i><span class="gm">-</span><span class="tx">            <span class="k">return</span> n.post(<span class="s">"/account/token"</span>, data)</span></div>
<div class="ln"><i class="g" style="left:26.4px"></i><span class="gm">-</span><span class="tx">        }</span></div>
<div class="ln"><i class="g" style="left:26.4px"></i><span class="gm">-</span><span class="tx">        ,</span></div>
<div class="ln"><i class="g" style="left:26.4px"></i><span class="gm">-</span><span class="tx">        t.mcpAccountList = <span class="k">function</span>(<span class="d">data</span>) {</span></div>
<div class="ln"><i class="g" style="left:26.4px"></i><i class="g" style="left:52.8px"></i><span class="gm">-</span><span class="tx">            <span class="k">return</span> n.post(<span class="s">"/account/list"</span>, data)</span></div>
<div class="ln"><i class="g" style="left:26.4px"></i><span class="gm">-</span><span class="tx">        }</span></div>
<div class="ln"><i class="g" style="left:26.4px"></i><span class="gm">-</span><span class="tx">        ,</span></div>
<div class="ln"><i class="g" style="left:26.4px"></i><span class="gm">-</span><span class="tx">        t.mcpAssetSum = <span class="k">function</span>(<span class="d">data</span>) {</span></div>
<div class="ln"><i class="g" style="left:26.4px"></i><i class="g" style="left:52.8px"></i><span class="gm">-</span><span class="tx">            <span class="k">return</span> n.post(<span class="s">"/account/sum/list"</span>, data)</span></div>
<div class="ln"><i class="g" style="left:26.4px"></i><span class="gm">-</span><span class="tx">        }</span></div>
<div class="ln"><i class="g" style="left:26.4px"></i><span class="gm">-</span><span class="tx">        ,</span></div>
<div class="ln"><i class="g" style="left:26.4px"></i><span class="gm">-</span><span class="tx">        t.batchCancelContract = <span class="k">function</span>(<span class="d">data</span>) {</span></div>
<div class="ln"><i class="g" style="left:26.4px"></i><i class="g a" style="left:52.8px"></i><span class="gm">-</span><span class="tx">            <span class="k">return</span> n.post(<span class="s">"</span><span class="c">/order</span><span class="s">/batchCancelContract"</span>, data)</span></div>
    </div>
  </div>
  <div id="hsb"><div class="al"></div><div class="th"></div></div>
  <div class="hl" style="top:1052px"></div>
  <div id="info">
    <svg class="abs" style="left:7px;top:12px" width="18" height="18" viewBox="0 0 18 18" fill="none"><circle cx="9" cy="9" r="7.4" stroke="#b4703f" stroke-width="1.2"/><path d="M9 7.8V12.6" stroke="#c08a62" stroke-width="1.5"/><circle cx="9" cy="5.4" r="0.9" fill="#c08a62"/></svg>
    <span class="abs" style="left:30px;top:0;line-height:46px">已加载源映射。</span>
    <span class="abs" style="left:122px;top:9px;width:74px;height:24px;line-height:22px;border:1px solid #fbab6e;border-radius:12px;text-align:center;color:#96571f">不再显示</span>
  </div>
  <div class="hl" style="top:1095px"></div>
  <div id="srch">
    <svg class="abs" style="left:0;top:0" width="70" height="32" viewBox="367 1126 70 32" fill="none" stroke-linecap="round" stroke-linejoin="round">
      <text x="375.6" y="1140.3" font-family="Liberation Sans, sans-serif" font-size="8" font-weight="bold" fill="#3a3a3a">A</text>
      <text x="385.6" y="1149.6" font-family="Liberation Sans, sans-serif" font-size="8" font-weight="bold" fill="#3a3a3a">B</text>
      <path d="M377.2 1142.2c.6 2.600000000000001 2.4 4 5.200000000000001 4.2M380.8 1144.8 382.8 1146.4 380.6 1147.8" stroke="#3a3a3a" stroke-width="1.1"/>
    </svg>
    <div class="abs" style="left:30px;top:5px;width:1300px;height:22px;border:2px solid #7b3f0a;border-radius:11px;background:#f1e6e3"></div>
    <svg class="abs" style="left:38px;top:6px" width="16" height="18" viewBox="405 1132 16 18" fill="none" stroke="#4a4a4a" stroke-width="1" stroke-linecap="round"><circle cx="411.4" cy="1140" r="3.6"/><path d="M414.1 1142.8 418.3 1146.6"/></svg>
    <span class="abs" style="left:60px;top:5px;line-height:26px;letter-spacing:0.55px;color:#1f1f1f">/order</span>
  </div>
  <div class="hl" style="top:1128px"></div>
  <div id="stat">
    <span class="abs" style="left:8.6px;top:5.2px;line-height:20px;font-size:14px;color:#b5651d;-webkit-text-stroke:0.35px #b5651d;letter-spacing:0.5px;word-spacing:1.6px">{ }</span>
    <span class="abs" style="left:35px;top:0;line-height:36px">6 已选择字符</span>
    <span class="abs" style="left:121px;top:0;line-height:32px;color:#96571f">覆盖范围: 不适用</span>
  </div>
</div>
<div id="bline"></div>
<div id="drawer">
  <span class="t act">控制台</span>
  <span class="t" style="left:73px">问题</span>
  <span class="t" style="left:117px">自动填充</span>
  <span class="t" style="left:185px">搜索</span>
  <span class="t" style="left:228px">网络条件</span>
  <svg class="abs" style="left:294px;top:8px" width="16" height="16" viewBox="0 0 16 16"><path d="M8 1.4V14.6M1.4 8H14.6" stroke="#5a524e" stroke-width="1.2" fill="none"/></svg>
</div>
<div class="redbox" style="left:29px;top:624px;width:212px;height:41px"></div>
<div class="redbox" style="left:440px;top:325px;width:548px;height:756px"></div>
<div class="abs" style="left:849px;top:918px;width:4px;height:35px;background:#ff0000"></div>
</body>
</html>
